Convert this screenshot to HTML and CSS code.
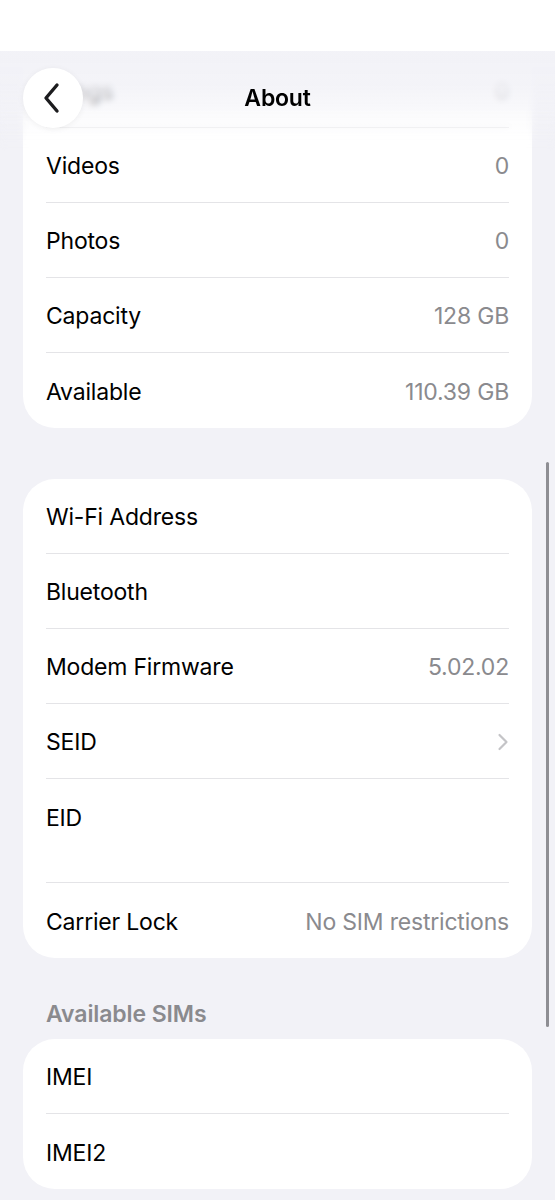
FILE: index.html
```html
<!DOCTYPE html>
<html>
<head>
    <title>About</title>
    <link rel="stylesheet" href="styles.css">
</head>
<body>
    <div class="status-bar"></div>

    <div class="screen">
        <div class="nav-bar">
            <button class="back-btn" aria-label="Back">
                <svg width="20" height="32" viewBox="0 0 20 32">
                    <path d="M15 3 L4 16 L15 29" fill="none" stroke="#1c1c1e" stroke-width="3.4" stroke-linecap="round" stroke-linejoin="round"/>
                </svg>
            </button>
            <div class="nav-title">About</div>
            <div></div>
        </div>

        <div class="content">
            <div class="card">
                <div class="row"><span class="label">Songs</span><span class="value">0</span></div>
                <div class="row"><span class="label">Videos</span><span class="value">0</span></div>
                <div class="row"><span class="label">Photos</span><span class="value">0</span></div>
                <div class="row"><span class="label">Capacity</span><span class="value">128 GB</span></div>
                <div class="row"><span class="label">Available</span><span class="value">110.39 GB</span></div>
            </div>

            <div class="card">
                <div class="row"><span class="label">Wi-Fi Address</span><span class="value"></span></div>
                <div class="row"><span class="label">Bluetooth</span><span class="value"></span></div>
                <div class="row"><span class="label">Modem Firmware</span><span class="value">5.02.02</span></div>
                <div class="row">
                    <span class="label">SEID</span>
                    <svg class="disclosure" width="12" height="18" viewBox="0 0 12 18">
                        <path d="M2.5 2 L9.5 9 L2.5 16" fill="none" stroke="#c4c4c7" stroke-width="2.2" stroke-linecap="round" stroke-linejoin="round"/>
                    </svg>
                </div>
                <div class="row tall"><span class="label">EID</span><span class="value"></span></div>
                <div class="row"><span class="label">Carrier Lock</span><span class="value">No SIM restrictions</span></div>
            </div>

            <div class="section-header">Available SIMs</div>
            <div class="card">
                <div class="row"><span class="label">IMEI</span><span class="value"></span></div>
                <div class="row"><span class="label">IMEI2</span><span class="value"></span></div>
            </div>
        </div>

        <div class="scroll-indicator"></div>
    </div>
</body>
</html>
```

FILE: styles.css
```css
body {
    margin: 0;
    font-family: Inter, "Noto Sans", Arial, sans-serif;
    background-color: #f2f2f7;
    color: #000;
    -webkit-font-smoothing: antialiased;
}
.status-bar {
    height: 51px;
    background: #fff;
}
.screen {
    position: relative;
    overflow: hidden;
}
.nav-bar {
    position: absolute;
    top: 0;
    left: 0;
    right: 0;
    height: 100px;
    padding: 17px 23px 0;
    box-sizing: border-box;
    display: grid;
    grid-template-columns: 60px 1fr 60px;
    align-items: start;
    z-index: 2;
}
/* blurred, fading backdrop behind the nav bar */
.nav-bar::before {
    content: "";
    position: absolute;
    inset: 0;
    z-index: -1;
    background: linear-gradient(to bottom,
        rgba(242,242,247,1) 0%,
        rgba(242,242,247,0.85) 35%,
        rgba(245,245,249,0.4) 70%,
        rgba(255,255,255,0) 100%);
    backdrop-filter: blur(3px);
    -webkit-mask-image: linear-gradient(to bottom, #000 55%, transparent 100%);
    mask-image: linear-gradient(to bottom, #000 55%, transparent 100%);
}
.back-btn {
    width: 60px;
    height: 60px;
    border-radius: 50%;
    border: none;
    background: #fff;
    box-shadow: 0 1px 6px rgba(0,0,0,0.06);
    display: flex;
    align-items: center;
    justify-content: center;
    padding: 0 3px 0 0;
}
.nav-title {
    text-align: center;
    font-size: 23px;
    font-weight: 600;
    line-height: 60px;
    letter-spacing: -0.2px;
}
.content {
    padding: 2px 23px 12px;
}
.card {
    background: #fff;
    border-radius: 32px;
    margin-bottom: 51px;
}
.row {
    margin: 0 23px;
    height: 75px;
    padding-top: 2px;
    display: flex;
    align-items: center;
    justify-content: space-between;
    border-bottom: 1px solid #e4e4e7;
    box-sizing: border-box;
    font-size: 23px;
    letter-spacing: -0.2px;
}
.row:last-child {
    border-bottom: none;
}
.row.tall {
    height: 104px;
    align-items: flex-start;
    padding-top: 25px;
}
.value {
    color: #8a8a8e;
}
.section-header {
    margin: -9px 0 11px 23px;
    height: 28px;
    line-height: 28px;
    font-size: 23px;
    font-weight: 600;
    color: #8a8a8e;
    letter-spacing: -0.1px;
}
.scroll-indicator {
    position: absolute;
    top: 411px;
    right: 6px;
    width: 3px;
    height: 565px;
    border-radius: 2px;
    background: #8e8e93;
}
```
